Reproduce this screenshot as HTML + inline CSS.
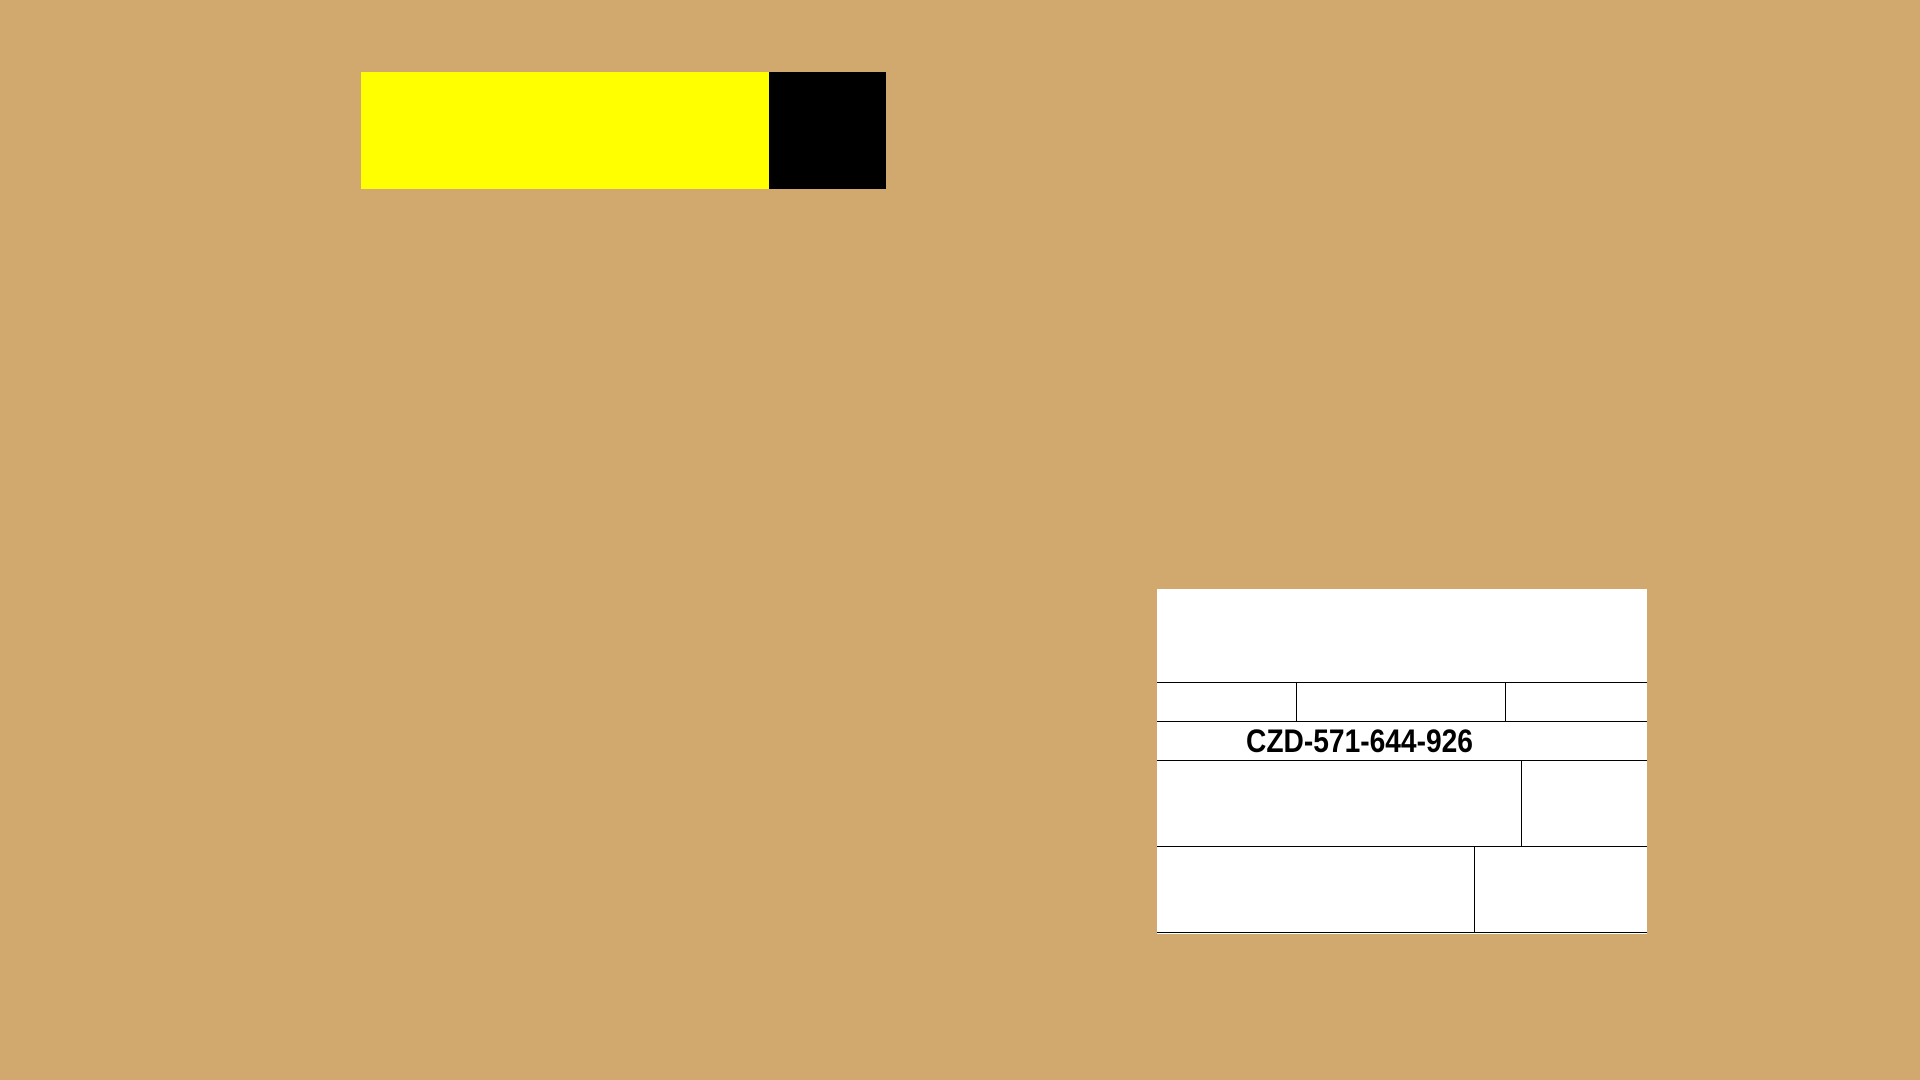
<!DOCTYPE html>
<html><head><meta charset="utf-8"><style>
html,body{margin:0;padding:0}
body{width:1920px;height:1080px;background:#d1a86d;position:relative;overflow:hidden;font-family:"Liberation Sans",sans-serif}
.a{position:absolute}
.h{position:absolute;height:1px;background:#000}
.v{position:absolute;width:1px;background:#000}
</style></head><body>
<div class="a" style="left:361px;top:72px;width:408px;height:117px;background:#ffff00"></div>
<div class="a" style="left:769px;top:72px;width:117px;height:117px;background:#000"></div>

<div class="a" style="left:1157px;top:589px;width:490px;height:345px;background:#fff"></div>
<div class="h" style="left:1157px;width:490px;top:682px"></div>
<div class="h" style="left:1157px;width:490px;top:721px"></div>
<div class="h" style="left:1157px;width:490px;top:760px"></div>
<div class="h" style="left:1157px;width:490px;top:846px"></div>
<div class="h" style="left:1157px;width:490px;top:932px"></div>
<div class="v" style="left:1296px;top:682px;height:39px"></div>
<div class="v" style="left:1505px;top:682px;height:39px"></div>
<div class="v" style="left:1521px;top:760px;height:86px"></div>
<div class="v" style="left:1474px;top:846px;height:86px"></div>
<div class="a" style="left:1246px;top:722px;height:38px;line-height:38px;font-size:32px;font-weight:bold;color:#000;white-space:nowrap;transform:scaleX(0.88);transform-origin:0 50%">CZD-571-644-926</div>
</body></html>
